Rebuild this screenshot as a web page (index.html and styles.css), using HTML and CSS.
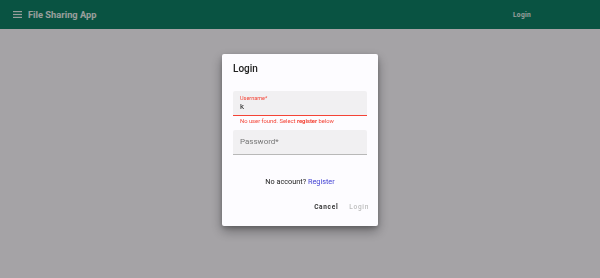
FILE: index.html
```html
<!DOCTYPE html>
<html lang="en">

<head>
    <meta charset="UTF-8">
    <meta name="viewport" content="width=device-width, initial-scale=1.0">
    <title>File Sharing App</title>
    <link rel="stylesheet" href="styles.css">
</head>

<body>
    <header class="app-bar">
        <div class="brand">
            <svg class="menu-icon" width="9" height="7" viewBox="0 0 9 7">
                <rect x="0" y="0" width="9" height="1.2" fill="currentColor"/>
                <rect x="0" y="2.9" width="9" height="1.2" fill="currentColor"/>
                <rect x="0" y="5.8" width="9" height="1.2" fill="currentColor"/>
            </svg>
            <span class="brand-title">File Sharing App</span>
        </div>
        <span class="nav-login">Login</span>
    </header>

    <main class="page"></main>

    <div class="backdrop">
        <div class="dialog">
            <h2 class="dialog-title">Login</h2>

            <div class="field field-error">
                <label class="field-label">Username*</label>
                <div class="field-value">k</div>
            </div>
            <div class="helper">No user found. Select <b>register</b> below</div>

            <div class="field">
                <div class="field-placeholder">Password*</div>
            </div>

            <p class="register-line">No account? <a class="register-link">Register</a></p>

            <div class="dialog-actions">
                <button class="btn">Cancel</button>
                <button class="btn btn-disabled">Login</button>
            </div>
        </div>
    </div>
</body>

</html>
```

FILE: styles.css
```css
body {
    margin: 0;
    font-family: Roboto, "Liberation Sans", sans-serif;
    background-color: #f6f3f8;
    height: 278px;
    overflow: hidden;
}

.app-bar {
    height: 29px;
    background-color: #0e7d63;
    color: #e4ece9;
    display: flex;
    align-items: center;
    justify-content: space-between;
    padding: 0 69px 0 13px;
}

.brand {
    display: flex;
    align-items: center;
}

.menu-icon {
    margin-right: 6px;
}

.brand-title {
    font-size: 9.3px;
    font-weight: 700;
}

.nav-login {
    font-size: 6.6px;
    font-weight: 700;
    letter-spacing: 0.3px;
}

.backdrop {
    position: fixed;
    inset: 0;
    background-color: rgba(0, 0, 0, 0.33);
    display: flex;
    align-items: center;
    justify-content: center;
}

.dialog {
    width: 134px;
    margin-top: 1px;
    padding: 9px 11px 12px;
    background-color: #fdfcff;
    border-radius: 2px;
    box-shadow: 0 5px 12px rgba(0, 0, 0, 0.35), 0 2px 4px rgba(0, 0, 0, 0.2);
    color: #222;
}

.dialog-title {
    margin: 0 0 16px;
    font-size: 10px;
    line-height: 12px;
    font-weight: 500;
}

.field {
    height: 24px;
    background-color: #f1f0f2;
    border-radius: 2px 2px 0 0;
    border-bottom: 1px solid #b8b8b8;
    padding: 0 7px;
    box-sizing: content-box;
}

.field-error {
    border-bottom-color: #f44336;
}

.field-label {
    display: block;
    padding-top: 4px;
    font-size: 5.5px;
    line-height: 6px;
    color: #f44336;
}

.field-value {
    font-size: 8px;
    line-height: 10px;
    margin-top: 1px;
}

.field-placeholder {
    font-size: 8px;
    line-height: 24px;
    color: #777;
}

.helper {
    margin: 2px 0 5px 7px;
    font-size: 5.8px;
    line-height: 7px;
    color: #f44336;
}

.register-line {
    margin: 22px 0 0;
    text-align: center;
    font-size: 7.3px;
    line-height: 10px;
}

.register-link {
    color: #3f3fd4;
}

.dialog-actions {
    display: flex;
    justify-content: flex-end;
    gap: 3px;
    margin-top: 13px;
    margin-right: -6px;
}

.btn {
    font-family: inherit;
    background: none;
    border: 0;
    padding: 3px 4px;
    font-size: 6.5px;
    line-height: 8px;
    font-weight: 700;
    letter-spacing: 0.7px;
    color: #333;
}

.btn-disabled {
    color: #bcbcbc;
    font-weight: 500;
}
```
